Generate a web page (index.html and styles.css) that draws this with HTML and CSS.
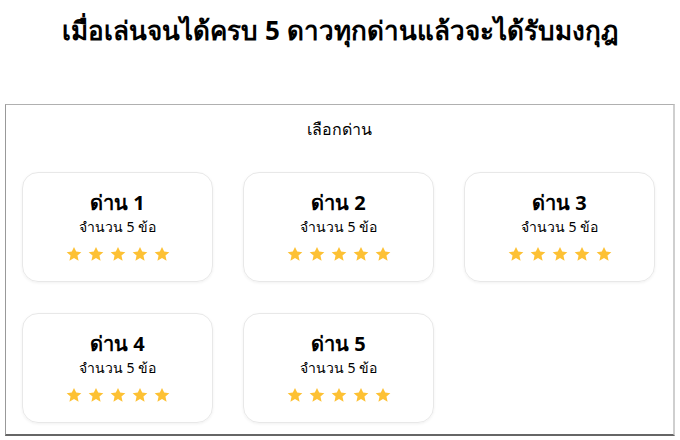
FILE: index.html
```html
<!DOCTYPE html>
<html lang="th">
<head>
<meta charset="utf-8">
<link rel="stylesheet" href="styles.css">
</head>
<body>
<h1 class="title">เมื่อเล่นจนได้ครบ 5 ดาวทุกด่านแล้วจะได้รับมงกุฎ</h1>
<div class="panel">
  <div class="panel-title">เลือกด่าน</div>
  <div class="grid">
    <div class="card"><div class="name">ด่าน 1</div><div class="count">จำนวน 5 ข้อ</div><div class="stars"><svg viewBox="0 0 24 24"><path d="M12 2.5l2.9 6.3 6.9.7-5.2 4.6 1.5 6.8L12 17.4l-6.1 3.5 1.5-6.8-5.2-4.6 6.9-.7z"/></svg><svg viewBox="0 0 24 24"><path d="M12 2.5l2.9 6.3 6.9.7-5.2 4.6 1.5 6.8L12 17.4l-6.1 3.5 1.5-6.8-5.2-4.6 6.9-.7z"/></svg><svg viewBox="0 0 24 24"><path d="M12 2.5l2.9 6.3 6.9.7-5.2 4.6 1.5 6.8L12 17.4l-6.1 3.5 1.5-6.8-5.2-4.6 6.9-.7z"/></svg><svg viewBox="0 0 24 24"><path d="M12 2.5l2.9 6.3 6.9.7-5.2 4.6 1.5 6.8L12 17.4l-6.1 3.5 1.5-6.8-5.2-4.6 6.9-.7z"/></svg><svg viewBox="0 0 24 24"><path d="M12 2.5l2.9 6.3 6.9.7-5.2 4.6 1.5 6.8L12 17.4l-6.1 3.5 1.5-6.8-5.2-4.6 6.9-.7z"/></svg></div></div>
    <div class="card"><div class="name">ด่าน 2</div><div class="count">จำนวน 5 ข้อ</div><div class="stars"><svg viewBox="0 0 24 24"><path d="M12 2.5l2.9 6.3 6.9.7-5.2 4.6 1.5 6.8L12 17.4l-6.1 3.5 1.5-6.8-5.2-4.6 6.9-.7z"/></svg><svg viewBox="0 0 24 24"><path d="M12 2.5l2.9 6.3 6.9.7-5.2 4.6 1.5 6.8L12 17.4l-6.1 3.5 1.5-6.8-5.2-4.6 6.9-.7z"/></svg><svg viewBox="0 0 24 24"><path d="M12 2.5l2.9 6.3 6.9.7-5.2 4.6 1.5 6.8L12 17.4l-6.1 3.5 1.5-6.8-5.2-4.6 6.9-.7z"/></svg><svg viewBox="0 0 24 24"><path d="M12 2.5l2.9 6.3 6.9.7-5.2 4.6 1.5 6.8L12 17.4l-6.1 3.5 1.5-6.8-5.2-4.6 6.9-.7z"/></svg><svg viewBox="0 0 24 24"><path d="M12 2.5l2.9 6.3 6.9.7-5.2 4.6 1.5 6.8L12 17.4l-6.1 3.5 1.5-6.8-5.2-4.6 6.9-.7z"/></svg></div></div>
    <div class="card"><div class="name">ด่าน 3</div><div class="count">จำนวน 5 ข้อ</div><div class="stars"><svg viewBox="0 0 24 24"><path d="M12 2.5l2.9 6.3 6.9.7-5.2 4.6 1.5 6.8L12 17.4l-6.1 3.5 1.5-6.8-5.2-4.6 6.9-.7z"/></svg><svg viewBox="0 0 24 24"><path d="M12 2.5l2.9 6.3 6.9.7-5.2 4.6 1.5 6.8L12 17.4l-6.1 3.5 1.5-6.8-5.2-4.6 6.9-.7z"/></svg><svg viewBox="0 0 24 24"><path d="M12 2.5l2.9 6.3 6.9.7-5.2 4.6 1.5 6.8L12 17.4l-6.1 3.5 1.5-6.8-5.2-4.6 6.9-.7z"/></svg><svg viewBox="0 0 24 24"><path d="M12 2.5l2.9 6.3 6.9.7-5.2 4.6 1.5 6.8L12 17.4l-6.1 3.5 1.5-6.8-5.2-4.6 6.9-.7z"/></svg><svg viewBox="0 0 24 24"><path d="M12 2.5l2.9 6.3 6.9.7-5.2 4.6 1.5 6.8L12 17.4l-6.1 3.5 1.5-6.8-5.2-4.6 6.9-.7z"/></svg></div></div>
    <div class="card"><div class="name">ด่าน 4</div><div class="count">จำนวน 5 ข้อ</div><div class="stars"><svg viewBox="0 0 24 24"><path d="M12 2.5l2.9 6.3 6.9.7-5.2 4.6 1.5 6.8L12 17.4l-6.1 3.5 1.5-6.8-5.2-4.6 6.9-.7z"/></svg><svg viewBox="0 0 24 24"><path d="M12 2.5l2.9 6.3 6.9.7-5.2 4.6 1.5 6.8L12 17.4l-6.1 3.5 1.5-6.8-5.2-4.6 6.9-.7z"/></svg><svg viewBox="0 0 24 24"><path d="M12 2.5l2.9 6.3 6.9.7-5.2 4.6 1.5 6.8L12 17.4l-6.1 3.5 1.5-6.8-5.2-4.6 6.9-.7z"/></svg><svg viewBox="0 0 24 24"><path d="M12 2.5l2.9 6.3 6.9.7-5.2 4.6 1.5 6.8L12 17.4l-6.1 3.5 1.5-6.8-5.2-4.6 6.9-.7z"/></svg><svg viewBox="0 0 24 24"><path d="M12 2.5l2.9 6.3 6.9.7-5.2 4.6 1.5 6.8L12 17.4l-6.1 3.5 1.5-6.8-5.2-4.6 6.9-.7z"/></svg></div></div>
    <div class="card"><div class="name">ด่าน 5</div><div class="count">จำนวน 5 ข้อ</div><div class="stars"><svg viewBox="0 0 24 24"><path d="M12 2.5l2.9 6.3 6.9.7-5.2 4.6 1.5 6.8L12 17.4l-6.1 3.5 1.5-6.8-5.2-4.6 6.9-.7z"/></svg><svg viewBox="0 0 24 24"><path d="M12 2.5l2.9 6.3 6.9.7-5.2 4.6 1.5 6.8L12 17.4l-6.1 3.5 1.5-6.8-5.2-4.6 6.9-.7z"/></svg><svg viewBox="0 0 24 24"><path d="M12 2.5l2.9 6.3 6.9.7-5.2 4.6 1.5 6.8L12 17.4l-6.1 3.5 1.5-6.8-5.2-4.6 6.9-.7z"/></svg><svg viewBox="0 0 24 24"><path d="M12 2.5l2.9 6.3 6.9.7-5.2 4.6 1.5 6.8L12 17.4l-6.1 3.5 1.5-6.8-5.2-4.6 6.9-.7z"/></svg><svg viewBox="0 0 24 24"><path d="M12 2.5l2.9 6.3 6.9.7-5.2 4.6 1.5 6.8L12 17.4l-6.1 3.5 1.5-6.8-5.2-4.6 6.9-.7z"/></svg></div></div>
  </div>
</div>
</body>
</html>
```
FILE: styles.css
```css
* { box-sizing: border-box; }
html, body { margin: 0; padding: 0; background: #fff; }
body {
  font-family: "Noto Sans", "DejaVu Sans", sans-serif;
  color: #000;
  padding: 0 5px;
}
.title {
  margin: 0;
  height: 104px;
  padding-top: 12px;
  text-align: center;
  font-size: 26px;
  font-weight: 700;
  line-height: 36px;
}
.panel {
  width: 670px;
  height: 332px;
  border-top: 1px solid #b0b0b0;
  border-left: 1px solid #999;
  border-right: 2px solid #cfcfcf;
  border-bottom: 2px solid #666;
  padding: 11px 16px 0 16px;
}
.panel-title {
  text-align: center;
  font-size: 16px;
  line-height: 26px;
  height: 26px;
}
.grid {
  margin-top: 30px;
  display: grid;
  grid-template-columns: repeat(3, 191px);
  column-gap: 30px;
  row-gap: 31px;
}
.card {
  height: 110px;
  border: 1px solid #e8e8e8;
  border-radius: 16px;
  box-shadow: 0 1px 3px rgba(0,0,0,0.06);
  display: flex;
  flex-direction: column;
  align-items: center;
  padding-top: 16px;
}
.name {
  font-size: 20px;
  font-weight: 700;
  line-height: 28px;
}
.count {
  font-size: 14px;
  line-height: 20px;
  margin-top: 0;
}
.stars {
  display: flex;
  gap: 4px;
  margin-top: 8px;
}
.stars svg {
  width: 18px;
  height: 18px;
  fill: #fdc134;
}
```
